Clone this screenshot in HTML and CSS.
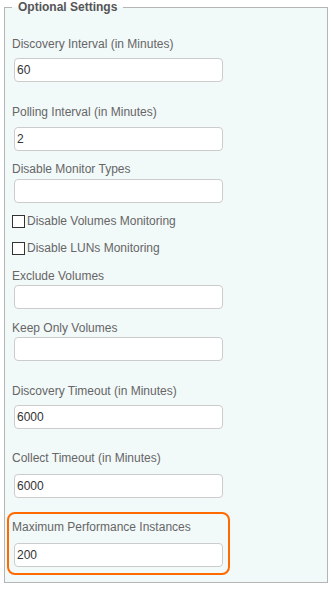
FILE: index.html
```html
<!DOCTYPE html>
<html>
<head>
<meta charset="utf-8">
<link rel="stylesheet" href="styles.css">
</head>
<body>
<fieldset class="panel">
  <legend class="panel-title">Optional Settings</legend>
  <div class="field first g7">
    <label class="field-label">Discovery Interval (in Minutes)</label>
    <input class="field-input" type="text" value="60">
  </div>
  <div class="field m23 g8">
    <label class="field-label">Polling Interval (in Minutes)</label>
    <input class="field-input" type="text" value="2">
  </div>
  <div class="field m11 g3">
    <label class="field-label">Disable Monitor Types</label>
    <input class="field-input" type="text" value="">
  </div>
  <label class="check m11"><span class="box"></span>Disable Volumes Monitoring</label>
  <label class="check m13"><span class="box"></span>Disable LUNs Monitoring</label>
  <div class="field m14 g2">
    <label class="field-label">Exclude Volumes</label>
    <input class="field-input" type="text" value="">
  </div>
  <div class="field m12 g2">
    <label class="field-label">Keep Only Volumes</label>
    <input class="field-input" type="text" value="">
  </div>
  <div class="field m23 g7">
    <label class="field-label">Discovery Timeout (in Minutes)</label>
    <input class="field-input" type="text" value="6000">
  </div>
  <div class="field m22 g9">
    <label class="field-label">Collect Timeout (in Minutes)</label>
    <input class="field-input" type="text" value="6000">
  </div>
  <div class="field highlight g9">
    <label class="field-label">Maximum Performance Instances</label>
    <input class="field-input" type="text" value="200">
  </div>
</fieldset>
</body>
</html>
```
FILE: styles.css
```css
html, body {
  margin: 0;
  padding: 0;
  background: #ffffff;
}
body {
  font-family: "Liberation Sans", Arial, sans-serif;
  font-size: 12px;
  line-height: 14px;
  color: #666666;
}
.panel {
  box-sizing: border-box;
  width: 324px;
  height: 583px;
  margin: 0 0 0 4px;
  padding: 0 7px 0 7px;
  border: 1px solid #b5b5b5;
  background: #f2f9f9;
  min-width: 0;
}
.panel-title {
  padding: 0 6px;
  margin-bottom: -6px;
  font-weight: bold;
  color: #555555;
  line-height: 14px;
}
.field {
  display: flex;
  flex-direction: column;
  align-items: flex-start;
}
.field-label {
  display: block;
  height: 14px;
}
.field-input {
  box-sizing: border-box;
  width: 209px;
  height: 24px;
  margin: 8px 0 0 2px;
  padding: 0 2px;
  border: 1px solid #cccccc;
  border-radius: 4px;
  background: #ffffff;
  font-family: "Liberation Sans", Arial, sans-serif;
  font-size: 12px;
  color: #333333;
  outline: none;
}
.g2 .field-input { margin-top: 2px; }
.g3 .field-input { margin-top: 3px; }
.g7 .field-input { margin-top: 7px; }
.g8 .field-input { margin-top: 8px; }
.g9 .field-input { margin-top: 9px; }
.first { margin-top: 29px; }
.m11 { margin-top: 11px; }
.m12 { margin-top: 12px; }
.m13 { margin-top: 13px; }
.m14 { margin-top: 14px; }
.m22 { margin-top: 22px; }
.m23 { margin-top: 23px; }
.check {
  display: flex;
  align-items: center;
  height: 14px;
}
.box {
  box-sizing: border-box;
  width: 13px;
  height: 13px;
  margin-right: 2px;
  border: 1px solid #333333;
  background: #ffffff;
}
.highlight {
  box-sizing: border-box;
  width: 223px;
  margin: 14px 0 0 -5px;
  padding: 6px 0 6px 3px;
  border: 2px solid #ff6a00;
  border-radius: 8px;
}
.highlight .field-input {
  margin-left: 2px;
}
```
